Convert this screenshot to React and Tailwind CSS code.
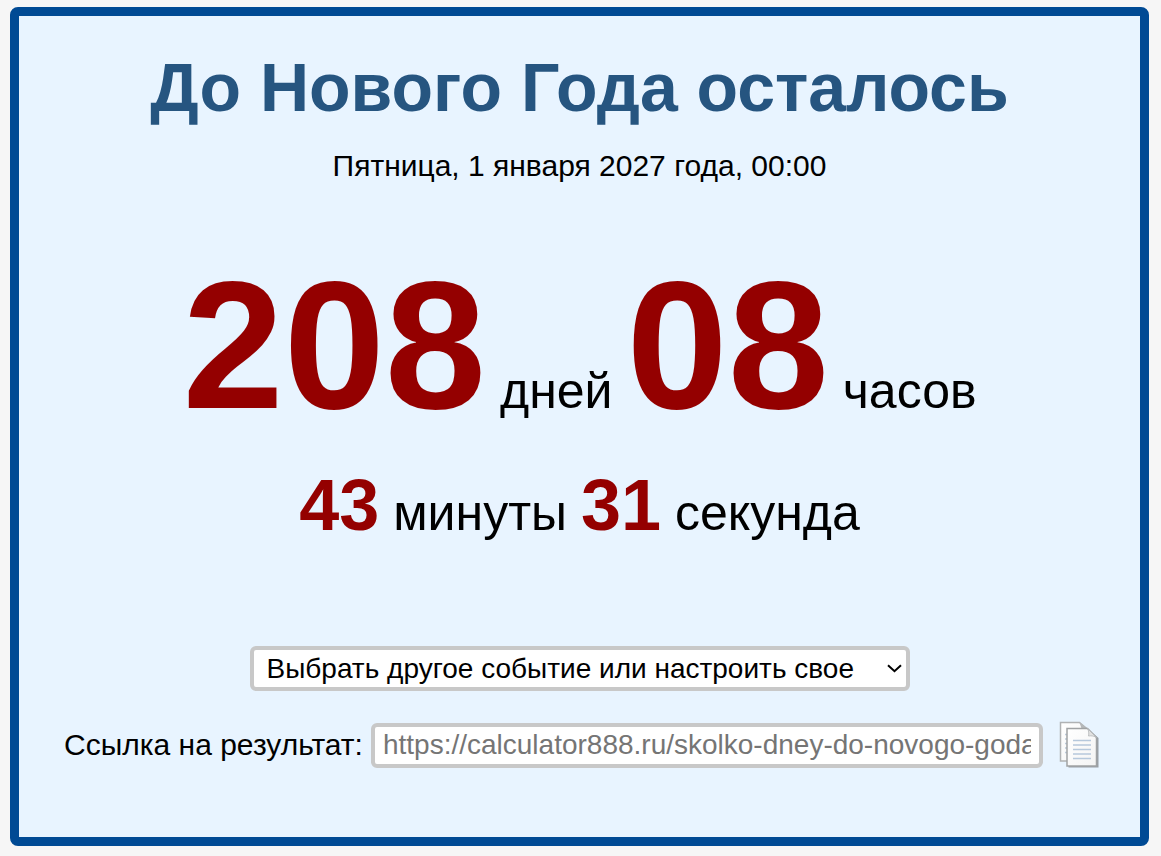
const COUNTERS = [
  { value: '208', unit: 'дней' },
  { value: '08', unit: 'часов' },
]

const SMALL_COUNTERS = [
  { value: '43', unit: 'минуты' },
  { value: '31', unit: 'секунда' },
]

const RESULT_URL = 'https://calculator888.ru/skolko-dney-do-novogo-goda'

const CopyIcon = () => (
  <svg width="40" height="48" viewBox="0 0 40 48" fill="none" aria-hidden="true">
    <defs>
      <linearGradient id="page" x1="0" y1="0" x2="1" y2="1">
        <stop offset="0" stopColor="#ffffff" />
        <stop offset="1" stopColor="#f4f4f4" />
      </linearGradient>
    </defs>
    {/* Back page */}
    <path d="M1.5 1.5h19l9 7.500v31h-28z" fill="url(#page)" stroke="#b0b2b4" strokeWidth="1.500" />
    <path d="M20.500 1.500l8 6h-6z" fill="#b5b8ba" />
    <path d="M6 13.500h3M6 18h3M6 22.500h3M6 27h3M6 31.500h3" stroke="#bccbdc" strokeWidth="1.300" />
    {/* Front page with its shadow */}
    <path d="M9.500 9h20.500l9.500 8v29.500h-30z" fill="#7d8388" opacity="0.75" />
    <path d="M8 7.500h20.500l9 9v28.500h-29.500z" fill="url(#page)" stroke="#a0a2a4" strokeWidth="1.500" />
    <path d="M28.500 7.500l9 9c-2-1.500-5-2-8-1.500 .6-2.500 .2-5.500-1-7.500z" fill="#e2e2e2" stroke="#b4b6b8" strokeWidth="0.800" />
    <path d="M14 19.500h18M14 24h18M14 28.500h18M14 33h18M14 37.500h18" stroke="#b6c8dc" strokeWidth="1.500" />
  </svg>
)

const CounterRow = ({ items, className, valueClassName }) => (
  <div className={`text-center text-[50px] leading-[60px] ${className}`}>
    {items.map(({ value, unit }) => (
      <span key={unit}>
        <b className={`leading-none text-[#940000] ${valueClassName}`}>{value}</b> {unit}{' '}
      </span>
    ))}
  </div>
)

export default function App() {
  return (
    <div className="bg-[#f6f6f6] pt-[7px] pr-3 pb-[10px] pl-[10px] font-['Liberation_Sans',Arial,sans-serif] text-black">
      <main className="flex flex-col items-center rounded-lg border-[9px] border-[#004a94] bg-[#e8f4ff] px-6 pt-8 pb-[68px]">
        <h1 className="text-center text-[68px] leading-[78px] font-bold text-[#265580]">
          До Нового Года осталось
        </h1>
        <p className="mt-5 text-center text-[30px] leading-[40px]">
          Пятница, 1 января 2027 года, 00:00
        </p>

        <CounterRow items={COUNTERS} className="mt-[68px]" valueClassName="text-[182px]" />
        <CounterRow items={SMALL_COUNTERS} className="mt-[33px]" valueClassName="text-[72px]" />

        <div className="relative mt-[103px] w-[660px] max-w-full">
          <select
            aria-label="Событие"
            className="block h-[45px] w-full appearance-none rounded-md border-4 border-[#c8c8c8] bg-white pr-8 pl-[13px] text-[28px] leading-[36px]"
          >
            <option>Выбрать другое событие или настроить свое</option>
          </select>
          <svg
            className="pointer-events-none absolute top-[18px] right-2 h-[9px] w-[15px]"
            viewBox="0 0 15 9"
            fill="none"
            aria-hidden="true"
          >
            <path d="M1 1.200l6.500 6 6.500-6" stroke="#000" strokeWidth="2" />
          </svg>
        </div>

        <div className="mt-[30px] flex max-w-full items-center pl-1">
          <label htmlFor="result" className="shrink-0 text-[30px] leading-[40px]">
            Ссылка на результат:
          </label>
          <input
            id="result"
            type="text"
            readOnly
            placeholder={RESULT_URL}
            className="ml-2 h-[45px] w-[672px] min-w-0 rounded-md border-4 border-[#c8c8c8] bg-white px-2 text-[28px] placeholder:text-[#757575]"
          />
          <button type="button" aria-label="Скопировать ссылку" className="ml-4 shrink-0">
            <CopyIcon />
          </button>
        </div>
      </main>
    </div>
  )
}
